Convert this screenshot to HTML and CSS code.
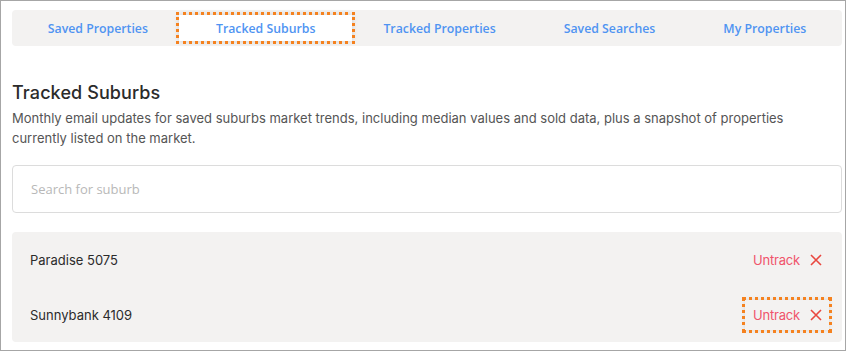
FILE: index.html
```html
<!DOCTYPE html>
<html lang="en">
<head>
<meta charset="utf-8">
<title>Tracked Suburbs</title>
<link rel="stylesheet" href="styles.css">
</head>
<body>
<div class="frame">
  <nav class="tabs">
    <a class="tab">Saved Properties</a>
    <a class="tab active">Tracked Suburbs</a>
    <a class="tab">Tracked Properties</a>
    <a class="tab">Saved Searches</a>
    <a class="tab">My Properties</a>
  </nav>
  <h1 class="title">Tracked Suburbs</h1>
  <p class="desc">Monthly email updates for saved suburbs market trends, including median values and sold data, plus a snapshot of properties currently listed on the market.</p>
  <input class="search" type="text" placeholder="Search for suburb">
  <ul class="list">
    <li class="row">
      <span class="name">Paradise 5075</span>
      <a class="untrack">Untrack
        <svg class="x" viewBox="0 0 12 12" width="12" height="12"><path d="M1 1L11 11M11 1L1 11" stroke="#e9473f" stroke-width="1.6" fill="none"/></svg>
      </a>
    </li>
    <li class="row">
      <span class="name">Sunnybank 4109</span>
      <a class="untrack focus">Untrack
        <svg class="x" viewBox="0 0 12 12" width="12" height="12"><path d="M1 1L11 11M11 1L1 11" stroke="#e9473f" stroke-width="1.6" fill="none"/></svg>
      </a>
    </li>
  </ul>
</div>
</body>
</html>
```
FILE: styles.css
```css
* { box-sizing: border-box; }
html, body { margin: 0; padding: 0; background: #fff; }
.frame {
  width: 846px;
  height: 351px;
  border: 1px solid #a6a6a6;
  padding: 9px 3px 0 11px;
  font-family: Inter, "Noto Sans", sans-serif;
  color: #333;
  overflow: hidden;
}
.tabs {
  display: flex;
  justify-content: center;
  align-items: center;
  height: 36px;
  padding: 0 4px;
  background: #f3f2f1;
  border-radius: 4px;
}
.tab {
  display: block;
  padding: 0 34px;
  height: 26px;
  line-height: 28px;
  font-family: "Open Sans", sans-serif;
  font-weight: 600;
  font-size: 12.3px;
  color: #4f94f2;
  white-space: nowrap;
}
.tab.active {
  background: #fff;
  padding: 0 37px;
  margin: 0 -3px;
  outline: 3px dotted #f5821f;
  box-shadow: 0 0 6px rgba(0,0,0,0.15);
}
.title {
  margin: 35px 0 0;
  font-size: 18px;
  font-weight: 500;
  line-height: 24px;
  color: #2b2b2b;
  letter-spacing: 0.1px;
}
.desc {
  margin: 4px 0 0;
  font-size: 13px;
  line-height: 19.5px;
  color: #555;
}
.search {
  display: block;
  width: 100%;
  height: 48px;
  margin: 17px 0 0;
  padding: 0 18px;
  border: 1px solid #dcdcdc;
  border-radius: 4px;
  font-family: "Open Sans", sans-serif;
  font-size: 13px;
  color: #333;
  outline: none;
}
.search::placeholder { color: #b8b8b8; }
.list {
  list-style: none;
  margin: 19px 0 0;
  padding: 0;
  background: #f3f2f1;
  border-radius: 4px;
}
.row {
  display: flex;
  align-items: center;
  justify-content: space-between;
  height: 55px;
  padding: 0 13px 0 18px;
  font-size: 13px;
}
.name { color: #2b2b2b; }
.untrack {
  display: flex;
  align-items: center;
  gap: 10px;
  padding: 7px 7px 7px 8px;
  color: #f0546b;
  font-size: 13px;
  letter-spacing: -0.2px;
}
.untrack.focus { outline: 3px dotted #f5821f; box-shadow: 0 0 5px rgba(0,0,0,0.12); }
.x { display: block; }
```
